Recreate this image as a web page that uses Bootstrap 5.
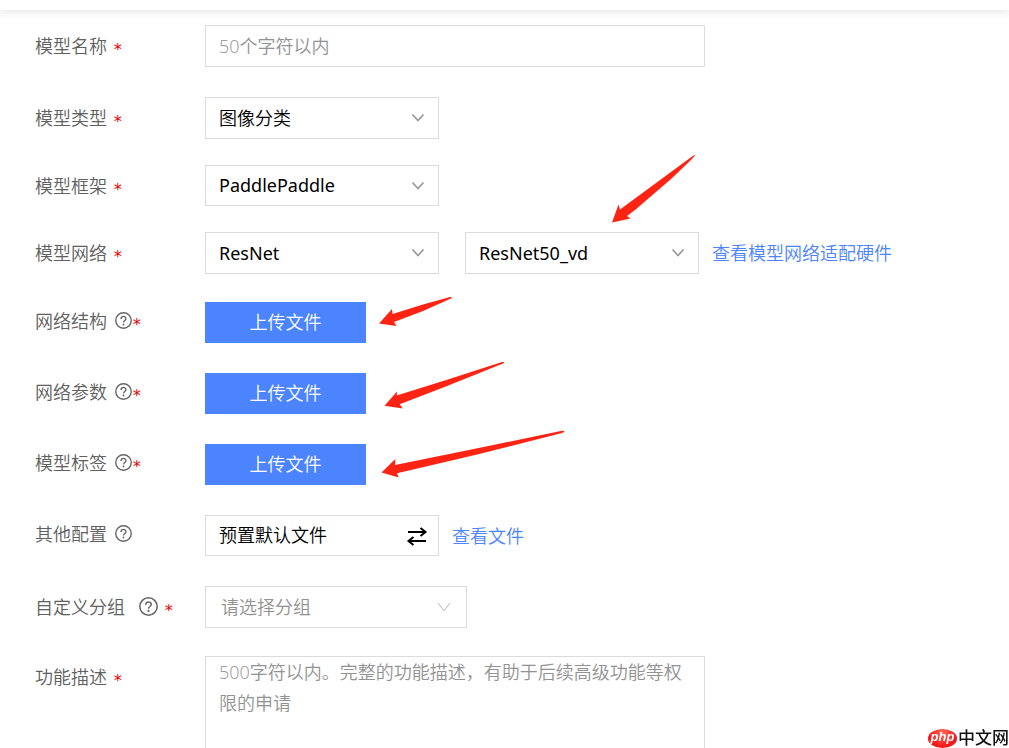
<!DOCTYPE html>
<html lang="zh-CN">
<head>
<meta charset="utf-8">
<meta name="viewport" content="width=device-width, initial-scale=1">
<title>模型上传</title>
<link href="https://cdn.jsdelivr.net/npm/bootstrap@5.3.0/dist/css/bootstrap.min.css" rel="stylesheet">
<style>
  body { font-family: "Open Sans", "Noto Sans CJK SC", sans-serif; font-size: 18px; font-weight: 350; line-height: 24px; color: #000; background: #fff; }
  .top-edge { height: 10px; box-shadow: 0 2px 8px rgba(0, 0, 0, .1); }
  .model-form { padding: 15px 14px 0 35px; }
  .field-row { margin-bottom: 30px; }
  .field-row.tight { margin-bottom: 26px; }
  .field-row.medium { margin-bottom: 28px; }
  .field-name { width: 170px; height: 41px; color: #606060; }
  .label-gap { gap: 6px; }
  .star { font-family: "DejaVu Sans Mono", monospace; font-size: 16px; line-height: 16px; color: #e60000; padding-top: 8px; }
  .control-box { height: 42px; padding: 0 13px; font-size: 18px; font-weight: 350; color: #000; background-color: #fff; border: 1px solid #dcdcdc; border-radius: 0; }
  .control-box.short { height: 41px; }
  .control-box.latin { font-family: "Noto Sans", sans-serif; font-weight: 400; }
  .control-box::placeholder { color: #929292; }
  select.control-box { background-image: url("data:image/svg+xml,%3Csvg xmlns='http://www.w3.org/2000/svg' viewBox='0 0 14 10'%3E%3Cpath d='M1.500 1.500 7 7.500 12.500 1.500' fill='none' stroke='%23999' stroke-width='1.700'/%3E%3C/svg%3E"); background-size: 14px 10px; background-position: right 13px center; }
  select.pale { color: #929292; padding-left: 15px; background-image: url("data:image/svg+xml,%3Csvg xmlns='http://www.w3.org/2000/svg' viewBox='0 0 14 10'%3E%3Cpath d='M1 1 7 8.500 13 1' fill='none' stroke='%23c4c4c4' stroke-width='1.100'/%3E%3C/svg%3E"); background-position: right 15px center; }
  textarea.control-box { line-height: 31px; resize: none; height: auto; }
  .w-full { max-width: 500px; }
  .w-pick { width: 234px; }
  .w-group { width: 262px; }
  .gap-link { gap: 13px; }
  .net-pair { gap: 26px; }
  .swap-btn { padding-right: 9px; }
  .upload-btn { width: 161px; height: 41px; padding: 0; font-size: 18px; font-weight: 350; color: #fff; background: #4c84ff; border: 0; border-radius: 0; }
  .text-link { color: #4c84ff; text-decoration: none; }
  .pointer { position: absolute; pointer-events: none; fill: #ff2314; }
  .pointer-net { left: 146px; top: -78px; }
  .pointer-file { left: 173px; top: -16px; }
  .site-mark { position: fixed; right: 0; bottom: 0; height: 20px; color: #111; font-size: 17px; font-weight: 500; line-height: 20px; }
  .php-oval { width: 29px; height: 19px; border-radius: 50%; color: #fff; background: radial-gradient(ellipse at 50% 20%, #ff6a5a, #f01818 65%); font: italic 700 13px/16px "Liberation Sans", sans-serif; }
  .site-name { padding-left: 1px; }
</style>
</head>
<body>
<div class="min-vh-100 d-flex flex-column">
  <header class="top-edge flex-shrink-0"></header>
  <form class="model-form flex-grow-1 d-flex flex-column">
    <div class="field-row d-flex">
      <label class="field-name d-flex align-items-center flex-shrink-0 label-gap" for="name">模型名称 <span class="star">*</span></label>
      <input id="name" class="form-control control-box w-full" type="text" placeholder="50个字符以内">
    </div>
    <div class="field-row tight d-flex">
      <label class="field-name d-flex align-items-center flex-shrink-0 label-gap" for="type">模型类型 <span class="star">*</span></label>
      <select id="type" class="form-select control-box w-pick"><option>图像分类</option></select>
    </div>
    <div class="field-row tight d-flex">
      <label class="field-name d-flex align-items-center flex-shrink-0 label-gap" for="frame">模型框架 <span class="star">*</span></label>
      <select id="frame" class="form-select control-box short latin w-pick"><option>PaddlePaddle</option></select>
    </div>
    <div class="field-row medium d-flex">
      <label class="field-name d-flex align-items-center flex-shrink-0 label-gap" for="net">模型网络 <span class="star">*</span></label>
      <div class="d-flex align-items-center gap-link">
        <div class="d-flex net-pair">
          <select id="net" class="form-select control-box latin w-pick"><option>ResNet</option></select>
          <div class="position-relative">
            <select class="form-select control-box latin w-pick" aria-label="网络版本"><option>ResNet50_vd</option></select>
            <svg class="pointer pointer-net" width="86" height="70" viewBox="0 0 86 70"><path d="M1 68.500 7.500 50.500 9 55.500 81 2.500Q84.500 0 84 1.500L80 6 60 25 24 56 16 62 19.500 64.500Z"/></svg>
          </div>
        </div>
        <a class="text-link" href="#">查看模型网络适配硬件</a>
      </div>
    </div>
    <div class="field-row d-flex">
      <label class="field-name d-flex align-items-center flex-shrink-0 pb-1" for="structure">网络结构
        <svg class="ms-2" width="17" height="17" viewBox="0 0 16 16"><use href="#help"/></svg><span class="star">*</span></label>
      <div class="position-relative">
        <button id="structure" class="btn upload-btn" type="button">上传文件</button>
        <svg class="pointer pointer-file" width="190" height="50" viewBox="0 0 190 50"><path d="M1 37.500 14 23 14.500 28 45 18.500 72 11Q75 10.500 73 12.500L45 25 16 36 18.500 40Z"/></svg>
      </div>
    </div>
    <div class="field-row d-flex">
      <label class="field-name d-flex align-items-center flex-shrink-0 pb-1" for="params">网络参数
        <svg class="ms-2" width="17" height="17" viewBox="0 0 16 16"><use href="#help"/></svg><span class="star">*</span></label>
      <div class="position-relative">
        <button id="params" class="btn upload-btn" type="button">上传文件</button>
        <svg class="pointer pointer-file" width="190" height="60" viewBox="0 0 190 60"><path d="M6.500 48.700 19 34.500 18.700 38.500 69 22.800 124 5Q128 4.500 125 6.500L69 29 21.700 47.300 24.700 51.500Z"/></svg>
      </div>
    </div>
    <div class="field-row d-flex">
      <label class="field-name d-flex align-items-center flex-shrink-0 pb-1" for="tags">模型标签
        <svg class="ms-2" width="17" height="17" viewBox="0 0 16 16"><use href="#help"/></svg><span class="star">*</span></label>
      <div class="position-relative">
        <button id="tags" class="btn upload-btn" type="button">上传文件</button>
        <svg class="pointer pointer-file" width="190" height="60" viewBox="0 0 190 60"><path d="M3.500 44.500 17.300 31 17 37 97 20.800 184 2.700Q189 2.500 184 5L97 27 19 45.300 20.700 49.500Z"/></svg>
      </div>
    </div>
    <div class="field-row d-flex">
      <label class="field-name d-flex align-items-center flex-shrink-0 pb-1" for="config">其他配置
        <svg class="ms-2" width="17" height="17" viewBox="0 0 16 16"><use href="#help"/></svg></label>
      <div class="d-flex align-items-center gap-link">
        <button id="config" class="btn control-box short swap-btn w-pick d-flex align-items-center justify-content-between" type="button">预置默认文件
          <svg width="24" height="20" viewBox="0 0 24 20" fill="none" stroke="#000" stroke-width="2"><path d="M3 6H20M15.500 2 20.500 6 15.500 10M21 15H4M8.500 11 3.500 15 8.500 19"/></svg></button>
        <a class="text-link" href="#">查看文件</a>
      </div>
    </div>
    <div class="field-row medium d-flex">
      <label class="field-name d-flex align-items-center flex-shrink-0 label-gap" for="group">自定义分组
        <svg class="ms-2" width="19" height="19" viewBox="0 0 16 16"><use href="#help"/></svg><span class="star">*</span></label>
      <select id="group" class="form-select control-box pale w-group"><option>请选择分组</option></select>
    </div>
    <div class="d-flex flex-grow-1">
      <label class="field-name d-flex align-items-center flex-shrink-0 label-gap" for="desc">功能描述 <span class="star">*</span></label>
      <textarea id="desc" class="form-control control-box w-full border-bottom-0 py-0" rows="2" placeholder="500字符以内。完整的功能描述，有助于后续高级功能等权限的申请"></textarea>
    </div>
  </form>
</div>
<div class="site-mark d-flex align-items-center">
  <span class="php-oval text-center">php</span><span class="site-name">中文网</span>
</div>
<svg class="d-none">
  <symbol id="help" viewBox="0 0 16 16"><g fill="none" stroke="#666" stroke-width="1.300"><circle cx="8" cy="8" r="7.300"/><path d="M5.700 6.500C5.700 3.400 10.300 3.400 10.300 6.300C10.300 8 8 8 8 9.800"/></g><circle cx="8" cy="11.700" r=".9" fill="#666"/></symbol>
</svg>
<script src="https://cdn.jsdelivr.net/npm/bootstrap@5.3.0/dist/js/bootstrap.bundle.min.js"></script>
</body>
</html>
